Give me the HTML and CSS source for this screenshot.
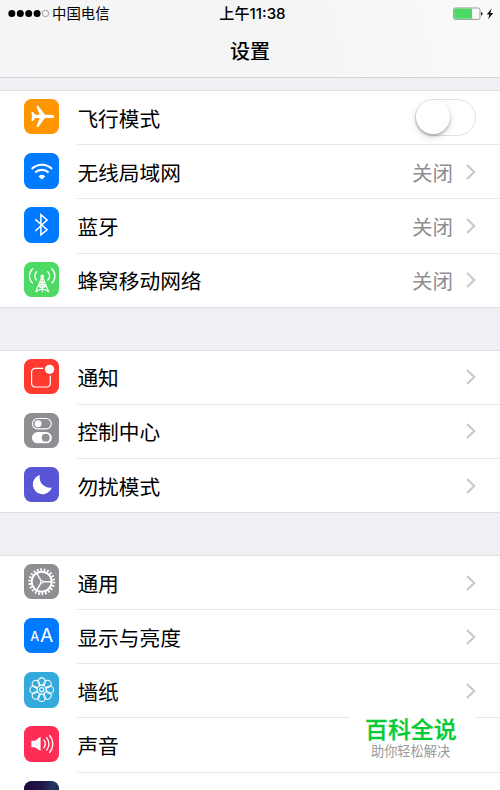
FILE: index.html
```html
<!DOCTYPE html>
<html lang="zh-CN">
<head>
    <meta charset="UTF-8">
    <meta name="viewport" content="width=device-width, initial-scale=1.0">
    <title>设置</title>
    <link rel="stylesheet" href="styles.css">
</head>
<body>
    <header>
        <div class="status">
            <div class="carrier">
                <svg class="signal" width="42" height="9" viewBox="0 0 42 9">
                    <circle cx="3.8" cy="4.5" r="3.5"/>
                    <circle cx="12.3" cy="4.5" r="3.5"/>
                    <circle cx="20.7" cy="4.5" r="3.5"/>
                    <circle cx="29.1" cy="4.5" r="3.5"/>
                    <circle cx="37.5" cy="4.5" r="3.2" fill="none" stroke="#777" stroke-width=".7"/>
                </svg>
                <span>中国电信</span>
            </div>
            <div class="time">上午11:38</div>
            <svg class="battery" width="42" height="14" viewBox="0 0 42 14">
                <rect x=".6" y="1" width="26.4" height="11.4" rx="1.6" fill="#fafafa" stroke="#999" stroke-width="1"/>
                <rect x="1.2" y="1.6" width="17.8" height="10.2" rx="1" fill="#4cd964"/>
                <path d="M28 5q1.6 0 1.6 1.8T28 8.6z" fill="#222"/>
                <path d="M38.6 1.5l-4.8 6h2.6l-1.2 4.7 5-6.2h-2.8z" fill="#111"/>
            </svg>
        </div>
        <h1>设置</h1>
    </header>

    <ul class="group">
        <li class="row">
            <svg class="icon orange" viewBox="0 0 35 35">
                <path fill="#fff" d="M29.9 17.2c0 1-1.2 1.7-3 1.7h-6.1l-6.7 8.8h-2l3.4-8.8h-4.2l-2.4 2.8H7.3l.6-4.5-.6-4.4h1.600l2.400 2.700h4.200L12 6.700h2l6.800 8.800h6.100c1.800 0 3 .7 3 1.700z"/>
            </svg>
            <div class="cell">
                <span class="label">飞行模式</span>
                <span class="switch"></span>
            </div>
        </li>
        <li class="row">
            <svg class="icon blue" viewBox="0 0 35 35">
                <g fill="none" stroke="#fff" stroke-width="2.1">
                    <path d="M7.6 15.8a14.2 14.2 0 0 1 20.2 0"/>
                    <path d="M11.1 19.4a9.4 9.4 0 0 1 13.2 0"/>
                </g>
                <path fill="#fff" d="M14.8 22.8a4.4 4.4 0 0 1 5.8 0q.4.5 0 .9l-2.900 2.500-2.900-2.500q-.4-.4 0-.9z"/>
            </svg>
            <div class="cell">
                <span class="label">无线局域网</span>
                <span class="value">关闭</span>
                <svg class="arrow" viewBox="0 0 10 16"><path d="M1 1l7.3 7L1 15"/></svg>
            </div>
        </li>
        <li class="row">
            <svg class="icon blue" viewBox="0 0 35 35">
                <path fill="none" stroke="#fff" stroke-width="1.5" d="M11.2 12.200l11.600 10.300-6.100 5.100V7.600l6.100 5.200-11.600 10.900"/>
            </svg>
            <div class="cell">
                <span class="label">蓝牙</span>
                <span class="value">关闭</span>
                <svg class="arrow" viewBox="0 0 10 16"><path d="M1 1l7.3 7L1 15"/></svg>
            </div>
        </li>
        <li class="row">
            <svg class="icon green" viewBox="0 0 35 35">
                <g fill="none" stroke="#fff" stroke-width="1.3" stroke-linecap="round">
                    <path d="M8.5 6.6c-4.1 4-4.1 10.3 0 14.3M12.5 9.6c-2.4 2.3-2.4 6 0 8.3M27.5 6.6c4.1 4 4.1 10.3 0 14.3M23.5 9.6c2.4 2.3 2.4 6 0 8.3"/>
                    <path stroke-width="1.1" d="M18 14l-6.4 15.4M18 14l6.4 15.4M18 14v15.4M15.6 19.8h4.8M14 23.8h8M15.6 19.8l6.4 4M20.4 19.8l-6.4 4M14 23.8l10.4 5.6M22 23.8l-10.4 5.6"/>
                </g>
                <circle cx="18" cy="14" r="1.7" fill="#fff"/>
            </svg>
            <div class="cell">
                <span class="label">蜂窝移动网络</span>
                <span class="value">关闭</span>
                <svg class="arrow" viewBox="0 0 10 16"><path d="M1 1l7.3 7L1 15"/></svg>
            </div>
        </li>
    </ul>

    <ul class="group">
        <li class="row">
            <svg class="icon red" viewBox="0 0 35 35">
                <path fill="none" stroke="#fff" stroke-width="1.2" d="M19 9.2h-7.500q-4 0-4 4v10.500q0 4 4 4h10.500q4 0 4-4V16.500"/>
                <circle cx="25.300" cy="10.200" r="4.600" fill="#fff"/>
            </svg>
            <div class="cell">
                <span class="label">通知</span>
                <svg class="arrow" viewBox="0 0 10 16"><path d="M1 1l7.3 7L1 15"/></svg>
            </div>
        </li>
        <li class="row">
            <svg class="icon gray" viewBox="0 0 35 35">
                <rect x="8.4" y="5.5" width="18.6" height="10.2" rx="5.1" fill="none" stroke="#fff" stroke-width="1.1"/>
                <circle cx="13.9" cy="10.6" r="3.4" fill="#fff"/>
                <rect x="7.9" y="18.8" width="19.6" height="11.2" rx="5.6" fill="#fff"/>
                <circle cx="21.5" cy="24.4" r="3.9" fill="#8e8e93"/>
            </svg>
            <div class="cell">
                <span class="label">控制中心</span>
                <svg class="arrow" viewBox="0 0 10 16"><path d="M1 1l7.3 7L1 15"/></svg>
            </div>
        </li>
        <li class="row">
            <svg class="icon purple" viewBox="0 0 35 35">
                <path fill="#fff" d="M15.800 8a9.600 9.600 0 1 0 11.700 12.200A10 10 0 0 1 15.800 8z"/>
            </svg>
            <div class="cell">
                <span class="label">勿扰模式</span>
                <svg class="arrow" viewBox="0 0 10 16"><path d="M1 1l7.3 7L1 15"/></svg>
            </div>
        </li>
    </ul>

    <ul class="group">
        <li class="row">
            <svg class="icon gray" viewBox="0 0 35 35">
                <g fill="none" stroke="#fff">
                    <circle cx="17.5" cy="17.5" r="12" stroke-width="2.7" stroke-dasharray="1.64 1.788"/>
                    <circle cx="17.5" cy="17.5" r="9.9" stroke-width="1.9"/>
                    <path stroke-width="1.4" d="M18.500 17.500h8.600M17 16.600l-4.600-7.700M17 18.400l-4.600 7.700"/>
                    <circle cx="17.5" cy="17.5" r="1.3" stroke-width="1"/>
                </g>
            </svg>
            <div class="cell">
                <span class="label">通用</span>
                <svg class="arrow" viewBox="0 0 10 16"><path d="M1 1l7.3 7L1 15"/></svg>
            </div>
        </li>
        <li class="row">
            <svg class="icon blue" viewBox="0 0 35 35">
                <text class="letter small" x="6.2" y="22.8">A</text>
                <text class="letter" x="15.900" y="24">A</text>
            </svg>
            <div class="cell">
                <span class="label">显示与亮度</span>
                <svg class="arrow" viewBox="0 0 10 16"><path d="M1 1l7.3 7L1 15"/></svg>
            </div>
        </li>
        <li class="row">
            <svg class="icon cyan" viewBox="0 0 35 35">
                <g fill="none" stroke="#fff" stroke-width="1.1">
                    <circle cx="17.5" cy="9.5" r="3.7"/>
                    <circle cx="23.2" cy="11.8" r="3.7"/>
                    <circle cx="25.5" cy="17.5" r="3.7"/>
                    <circle cx="23.2" cy="23.2" r="3.7"/>
                    <circle cx="17.5" cy="25.5" r="3.7"/>
                    <circle cx="11.8" cy="23.2" r="3.7"/>
                    <circle cx="9.5" cy="17.5" r="3.7"/>
                    <circle cx="11.8" cy="11.8" r="3.7"/>
                    <circle cx="17.5" cy="17.5" r="4.8" stroke-width="1.4" stroke-dasharray="2.2 1.57"/>
                    <circle cx="17.5" cy="17.5" r="2"/>
                </g>
            </svg>
            <div class="cell">
                <span class="label">墙纸</span>
                <svg class="arrow" viewBox="0 0 10 16"><path d="M1 1l7.3 7L1 15"/></svg>
            </div>
        </li>
        <li class="row">
            <svg class="icon pink" viewBox="0 0 35 35">
                <path fill="#fff" d="M7.3 14.5h3.5l5.6-3.9v14.2l-5.6-3.900H7.300z"/>
                <path fill="none" stroke="#fff" stroke-width="1.3" stroke-linecap="round" d="M19.6 13.8c1.700 2.300 1.700 5.500 0 7.800M22.400 11.600c3 3.600 3 8.600 0 12.200M25.300 9.300c4.200 5 4.200 11.800 0 16.800"/>
            </svg>
            <div class="cell">
                <span class="label">声音</span>
            </div>
        </li>
        <li class="row">
            <span class="icon siri"></span>
            <div class="cell"></div>
        </li>
    </ul>

    <div class="watermark">
        <strong>百科全说</strong>
        <span>助你轻松解决</span>
    </div>
</body>
</html>
```
FILE: styles.css
```css
* {
    box-sizing: border-box;
}

html {
    overflow: hidden;
}

body {
    font-family: "Liberation Sans", "Noto Sans CJK SC", sans-serif;
    background-color: #efeff4;
    color: #000;
    margin: 0;
    height: 790px;
    overflow: hidden;
    position: relative;
}

header {
    height: 78px;
    background: linear-gradient(75deg, #f5f5f7 0%, #f5f5f5 60%, #fafafa 100%);
    border-bottom: 1px solid #d5d5d9;
}

.status {
    display: grid;
    grid-template-columns: 1fr auto 1fr;
    align-items: center;
    height: 25px;
    padding: 0 5px 0 8px;
    font-size: 14.4px;
    line-height: 25px;
}

.carrier {
    display: flex;
    align-items: center;
    gap: 2px;
}

.carrier span {
    padding-top: 2px;
}

.signal {
    margin-top: -1px;
}

.time {
    font-family: Inter, "Noto Sans CJK SC", sans-serif;
    font-weight: 500;
    font-size: 15.1px;
    margin-left: 2px;
}

.battery {
    justify-self: end;
}

h1 {
    margin: 10px 0 0;
    font-size: 20px;
    line-height: 34px;
    font-weight: 500;
    text-align: center;
}

.group {
    list-style: none;
    margin: 12px 0 0;
    padding: 0;
    background-color: #fff;
    border-top: 1px solid #e2e2e5;
}

.group + .group {
    margin-top: 41.8px;
}

.row {
    display: flex;
    height: 54.2px;
    padding-left: 24px;
}

.row:last-child {
    border-bottom: 1px solid #dedee2;
}

.icon {
    flex: none;
    width: 35.4px;
    height: 35.4px;
    margin: 8px 18px 0 0;
    border-radius: 7.5px;
}

.cell {
    flex: 1;
    display: flex;
    align-items: center;
    padding-right: 24px;
    border-bottom: 1px solid #e6e6e8;
}

.row:last-child .cell {
    border-bottom: none;
}

.label {
    flex: 1;
    font-size: 20.7px;
    line-height: 30px;
    padding-top: 4px;
}

.value {
    color: #8e8e93;
    font-size: 20.5px;
    line-height: 30px;
    padding-top: 4px;
    margin-right: 13px;
}

.arrow {
    width: 10px;
    height: 16px;
    fill: none;
    stroke: #c7c7cc;
    stroke-width: 2;
}

.switch {
    width: 61px;
    height: 37px;
    border: 1.5px solid #e2e2e2;
    border-radius: 19px;
}

.switch::before {
    content: "";
    display: block;
    width: 34px;
    height: 34px;
    border-radius: 50%;
    background-color: #fff;
    box-shadow: 0 2px 3px rgba(0, 0, 0, 0.24), 0 3px 9px rgba(0, 0, 0, 0.12);
}

.orange { background-color: #ff9500; }
.blue { background-color: #007aff; }
.green { background-color: #4cd964; }
.red { background-color: #ff3b30; }
.gray { background-color: #8e8e93; }
.purple { background-color: #5856d6; }
.cyan { background-color: #34aadc; }
.pink { background-color: #ff2d55; }
.siri { background: linear-gradient(100deg, #1c0b3d, #241447 45%, #203860 75%, #1b1744); }

.letter {
    fill: #fff;
    font-family: Inter, sans-serif;
    font-size: 19px;
}

.letter.small {
    font-size: 12.5px;
    font-weight: 500;
}

.watermark {
    position: absolute;
    left: 350px;
    top: 712px;
    width: 125px;
    height: 58px;
    padding: 3px 0 0 15px;
    background-color: #fff;
}

.watermark strong,
.watermark span {
    display: block;
    white-space: nowrap;
}

.watermark strong {
    color: #06cb36;
    font-size: 22.9px;
    font-weight: 500;
    line-height: 30px;
    -webkit-text-stroke: 0.3px #06cb36;
}

.watermark span {
    color: #999;
    font-size: 13.2px;
    line-height: 14px;
    padding-left: 6px;
}
```
